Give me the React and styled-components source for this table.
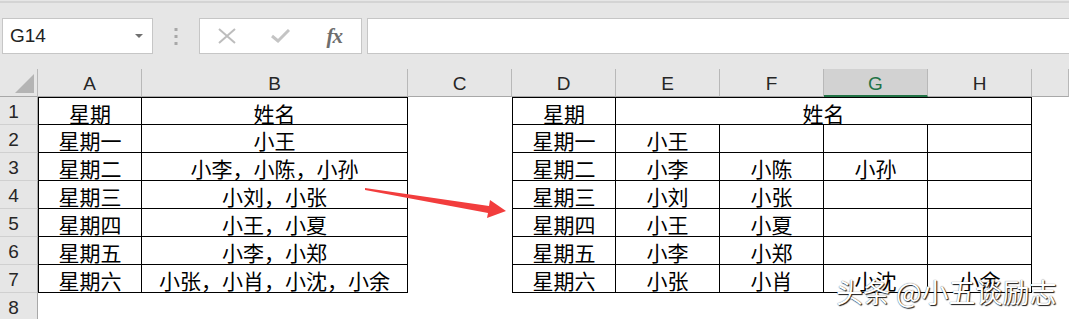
import React from "react";
import styled, { createGlobalStyle } from "styled-components";

const GlobalStyle = createGlobalStyle`
  html, body {
    margin: 0;
    padding: 0;
    overflow: hidden;
    background: #fff;
    font-family: "Liberation Sans", "Noto Sans CJK SC", sans-serif;
  }
`;

const Page = styled.div`
  position: relative;
  width: 1069px;
  height: 319px;
  overflow: hidden;
`;

const Toolbar = styled.div`
  background: #e6e6e6;
  padding-top: 1px;
  height: 69px;
  box-sizing: border-box;
`;

const TopRule = styled.div`
  height: 2px;
  background: #d4d4d4;
`;

const FormulaRow = styled.div`
  display: flex;
  align-items: center;
  margin-top: 15px;
  height: 36px;
  padding-left: 2px;
`;

const NameBox = styled.div`
  width: 151px;
  height: 36px;
  box-sizing: border-box;
  background: #fff;
  border: 1px solid #c6c6c6;
  display: flex;
  align-items: center;
  padding-left: 7px;
  font-size: 19px;
  color: #222;
`;

const Caret = styled.span`
  margin-left: auto;
  margin-right: 9px;
  width: 0;
  height: 0;
  border-left: 4px solid transparent;
  border-right: 4px solid transparent;
  border-top: 4px solid #707070;
`;

const Grip = styled.div`
  width: 46px;
  display: flex;
  justify-content: center;
`;

const FxBox = styled.div`
  width: 163px;
  height: 36px;
  box-sizing: border-box;
  background: #fff;
  border: 1px solid #c6c6c6;
  display: flex;
`;

const FxSlot = styled.div`
  flex: 1;
  display: flex;
  align-items: center;
  justify-content: center;
`;

const FxLabel = styled.span`
  font-family: "Liberation Serif", serif;
  font-style: italic;
  font-weight: bold;
  font-size: 21px;
  color: #6e6e6e;
  letter-spacing: -1px;
`;

const FormulaInput = styled.div`
  flex: 1;
  height: 36px;
  margin-left: 5px;
  margin-right: -2px;
  box-sizing: border-box;
  background: #fff;
  border: 1px solid #c6c6c6;
`;

const Sheet = styled.div`
  display: grid;
  grid-template-columns: 38px 104px 266px repeat(6, 104px) 1fr;
  grid-template-rows: 28px;
  grid-auto-rows: 28px;
`;

const Corner = styled.div`
  position: relative;
  background: #e6e6e6;
  border-right: 1px solid #b8b8b8;
  border-bottom: 1px solid #a8a8a8;
  &::after {
    content: "";
    position: absolute;
    right: 3px;
    bottom: 3px;
    border-left: 19px solid transparent;
    border-bottom: 19px solid #b4b4b4;
  }
`;

const ColHead = styled.div`
  display: flex;
  align-items: center;
  justify-content: center;
  padding-top: 3px;
  background: ${(p) => (p.$active ? "#d2d2d2" : "#e6e6e6")};
  color: ${(p) => (p.$active ? "#217346" : "#262626")};
  border-right: 1px solid #b8b8b8;
  border-bottom: ${(p) => (p.$active ? "2px solid #217346" : "1px solid #a8a8a8")};
  font-size: 19px;
`;

const RowHead = styled.div`
  display: flex;
  align-items: center;
  justify-content: center;
  padding-right: 10px;
  padding-top: 2px;
  background: #e6e6e6;
  border-right: 1px solid #a8a8a8;
  border-bottom: 1px solid #d0d0d0;
  font-size: 19px;
  color: #262626;
`;

const Cell = styled.div`
  display: flex;
  align-items: center;
  justify-content: center;
  padding-top: 4px;
  background: #fff;
  white-space: nowrap;
  overflow: visible;
  font-family: "Noto Sans CJK SC", sans-serif;
  font-size: 21px;
  line-height: 1;
  color: #000;
  grid-column: span ${(p) => p.$span || 1};
  border-right: 1px solid ${(p) => (p.$boxed ? "#000" : "transparent")};
  border-bottom: 1px solid ${(p) => (p.$boxed ? "#000" : "transparent")};
  border-top: ${(p) => (p.$top ? "1px solid #000" : "none")};
  border-left: ${(p) => (p.$left ? "1px solid #000" : "none")};
`;

const Arrow = styled.svg`
  position: absolute;
  left: 360px;
  top: 185px;
  pointer-events: none;
`;

const Watermark = styled.div`
  position: absolute;
  left: 836px;
  top: 276px;
  font-family: "Noto Sans CJK SC", sans-serif;
  font-size: 27px;
  line-height: 1.2;
  color: #fff;
  white-space: nowrap;
  text-shadow: 1px 1px 1px rgba(0, 0, 0, 0.9), 0 0 1px rgba(0, 0, 0, 0.7);
`;

const COLS = ["A", "B", "C", "D", "E", "F", "G", "H", ""];

const leftTable = [
  ["星期", "姓名"],
  ["星期一", "小王"],
  ["星期二", "小李，小陈，小孙"],
  ["星期三", "小刘，小张"],
  ["星期四", "小王，小夏"],
  ["星期五", "小李，小郑"],
  ["星期六", "小张，小肖，小沈，小余"],
];

const rightTable = [
  ["星期", "姓名"],
  ["星期一", "小王", "", "", ""],
  ["星期二", "小李", "小陈", "小孙", ""],
  ["星期三", "小刘", "小张", "", ""],
  ["星期四", "小王", "小夏", "", ""],
  ["星期五", "小李", "小郑", "", ""],
  ["星期六", "小张", "小肖", "小沈", "小余"],
];

const renderRow = (i) => {
  if (i >= leftTable.length) {
    return COLS.map((c, k) => <Cell key={k} />);
  }
  const cells = [];
  leftTable[i].forEach((t, k) =>
    cells.push(
      <Cell key={"l" + k} $boxed $top={i === 0} $left={k === 0}>
        {t}
      </Cell>
    )
  );
  cells.push(<Cell key="c" />);
  rightTable[i].forEach((t, k) =>
    cells.push(
      <Cell
        key={"r" + k}
        $boxed
        $top={i === 0}
        $left={k === 0}
        $span={i === 0 && k === 1 ? 4 : 1}
      >
        {t}
      </Cell>
    )
  );
  cells.push(<Cell key="i" />);
  return cells;
};

const App = () => {
  const rows = [1, 2, 3, 4, 5, 6, 7, 8];
  return (
    <Page>
      <GlobalStyle />
      <Toolbar>
        <TopRule />
        <FormulaRow>
          <NameBox>
            G14
            <Caret />
          </NameBox>
          <Grip>
            <svg width="4" height="17" viewBox="0 0 4 17">
              <rect x="0.5" y="0" width="3" height="3" fill="#a8a8a8" />
              <rect x="0.5" y="7" width="3" height="3" fill="#a8a8a8" />
              <rect x="0.5" y="14" width="3" height="3" fill="#a8a8a8" />
            </svg>
          </Grip>
          <FxBox>
            <FxSlot>
              <svg width="18" height="16" viewBox="0 0 18 16">
                <path d="M1 1 L17 15 M17 1 L1 15" stroke="#bdbdbd" strokeWidth="2" fill="none" />
              </svg>
            </FxSlot>
            <FxSlot>
              <svg width="19" height="14" viewBox="0 0 19 14">
                <path d="M1 7 L7 12 L18 1" stroke="#c4c4c4" strokeWidth="3" fill="none" />
              </svg>
            </FxSlot>
            <FxSlot>
              <FxLabel>fx</FxLabel>
            </FxSlot>
          </FxBox>
          <FormulaInput />
        </FormulaRow>
      </Toolbar>
      <Sheet>
        <Corner />
        {COLS.map((c, k) => (
          <ColHead key={k} $active={c === "G"}>
            {c}
          </ColHead>
        ))}
        {rows.map((r, i) => (
          <React.Fragment key={r}>
            <RowHead>{r}</RowHead>
            {renderRow(i)}
          </React.Fragment>
        ))}
      </Sheet>
      <Arrow width="150" height="40" viewBox="0 0 150 40">
        <polygon
          points="5,3 129,21 130,15 146,26 127,33 128,28 5,5"
          fill="#f23d3d"
        />
      </Arrow>
      <Watermark>头条 @小五谈励志</Watermark>
    </Page>
  );
};

export default App;
